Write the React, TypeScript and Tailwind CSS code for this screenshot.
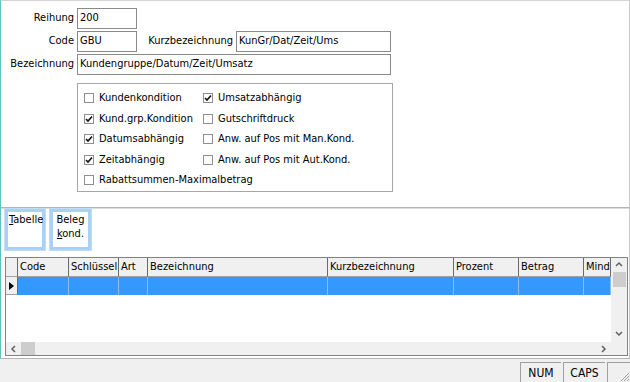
import React from "react";

const FONT = "font-['DejaVu_Sans_Condensed','DejaVu_Sans',sans-serif]";

type Col = { title: string; width: string };

const COLUMNS: Col[] = [
  { title: "Code", width: "w-[51px]" },
  { title: "Schlüssel", width: "w-[50px]" },
  { title: "Art", width: "w-[29px]" },
  { title: "Bezeichnung", width: "w-[180px]" },
  { title: "Kurzbezeichnung", width: "w-[126px]" },
  { title: "Prozent", width: "w-[65px]" },
  { title: "Betrag", width: "w-[65px]" },
  { title: "Mind", width: "w-[27px]" },
];

function Check({ checked, label }: { checked?: boolean; label: string }) {
  return (
    <div className="flex h-[20.5px] items-center gap-[5px] whitespace-nowrap">
      <span className="flex h-[10px] w-[10px] shrink-0 items-center justify-center border border-[#8f8f8f] bg-white">
        {checked && (
          <svg width="8" height="8" viewBox="0 0 8 8">
            <path d="M1 4 L3 6 L7 1.5" fill="none" stroke="#111" strokeWidth="1.6" />
          </svg>
        )}
      </span>
      <span>{label}</span>
    </div>
  );
}

function Field({ value, width }: { value: string; width: string }) {
  return (
    <div
      className={`flex h-[21px] ${width} items-center border border-[#8a8a8a] bg-white pl-[2px] whitespace-nowrap`}
    >
      {value}
    </div>
  );
}

function Chevron({ dir }: { dir: "up" | "down" | "left" | "right" }) {
  const d = {
    up: "M1 5 L4 2 L7 5",
    down: "M1 2 L4 5 L7 2",
    left: "M5 1 L2 4 L5 7",
    right: "M2 1 L5 4 L2 7",
  }[dir];
  return (
    <svg width="8" height="8" viewBox="0 0 8 8">
      <path d={d} fill="none" stroke="#606060" strokeWidth="1.5" />
    </svg>
  );
}

export default function App() {
  return (
    <div
      className={`flex h-[382px] w-[630px] flex-col overflow-hidden bg-white text-[11px] text-black ${FONT}`}
    >
      {/* Main area */}
      <div className="flex flex-1 flex-col border-l border-r border-t border-l-[#5cc3c3] border-r-[#c8c8c8] border-t-[#d4d4d4]">
        {/* Form */}
        <div className="flex h-[206px] flex-col pt-[7px]">
          <div className="flex flex-col gap-[2px]">
            <div className="flex items-center">
              <div className="w-[76px] pr-[3px] text-right">Reihung</div>
              <Field value="200" width="w-[60px]" />
            </div>
            <div className="flex items-center">
              <div className="w-[76px] pr-[3px] text-right">Code</div>
              <Field value="GBU" width="w-[60px]" />
              <div className="w-[99px] pr-[3px] text-right">Kurzbezeichnung</div>
              <Field value="KunGr/Dat/Zeit/Ums" width="w-[155px]" />
            </div>
            <div className="flex items-center">
              <div className="w-[76px] pr-[3px] text-right">Bezeichnung</div>
              <Field value="Kundengruppe/Datum/Zeit/Umsatz" width="w-[314px]" />
            </div>
          </div>

          {/* Options group */}
          <div className="ml-[76px] mt-[8px] h-[109px] w-[316px] border border-[#a6a6a6] pl-[6px] pt-[4px]">
            <div className="grid grid-cols-[119px_1fr]">
              <Check label="Kundenkondition" />
              <Check checked label="Umsatzabhängig" />
              <Check checked label="Kund.grp.Kondition" />
              <Check label="Gutschriftdruck" />
              <Check checked label="Datumsabhängig" />
              <Check label="Anw. auf Pos mit Man.Kond." />
              <Check checked label="Zeitabhängig" />
              <Check label="Anw. auf Pos mit Aut.Kond." />
              <div className="col-span-2">
                <Check label="Rabattsummen-Maximalbetrag" />
              </div>
            </div>
          </div>
        </div>

        {/* Splitter */}
        <div className="h-[2px] border-b border-t border-b-[#dcdcdc] border-t-[#b4b4b4]" />

        {/* Toolbar */}
        <div className="flex h-[48px] gap-[5px] pl-[4px]">
          <div className="h-[41px] w-[40px] border-[3px] border-[#a9d1f5] bg-white pl-[1px] pt-[1px] leading-[14px] whitespace-nowrap outline outline-1 outline-[#c4dcf2]">
            <span className="underline">T</span>abelle
          </div>
          <div className="h-[41px] w-[41px] border-[3px] border-[#a9d1f5] bg-white pt-[1px] text-center leading-[14px] outline outline-1 outline-[#c4dcf2]">
            Beleg
            <br />
            <span className="underline">k</span>ond.
          </div>
        </div>

        {/* Grid */}
        <div className="ml-[4px] flex h-[99px] w-[623px] flex-col border border-[#828282]">
          <div className="flex flex-1 overflow-hidden">
            <div className="flex flex-1 flex-col overflow-hidden">
              {/* Header */}
              <div className="flex h-[19px] shrink-0">
                <div className="w-[12px] shrink-0 border-b border-r border-b-[#a0a0a0] border-r-[#6b6b6b] bg-[#f0f0f0]" />
                {COLUMNS.map((c) => (
                  <div
                    key={c.title}
                    className={`${c.width} flex shrink-0 items-center overflow-hidden whitespace-nowrap border-b border-r border-b-[#a0a0a0] border-r-[#6b6b6b] bg-[#f0f0f0] pl-[2px]`}
                  >
                    {c.title}
                  </div>
                ))}
              </div>
              {/* Selected row */}
              <div className="flex h-[18px] shrink-0">
                <div className="flex w-[12px] shrink-0 items-center justify-center border-b border-r border-b-[#a0a0a0] border-r-[#6b6b6b] bg-[#f0f0f0]">
                  <svg width="5" height="8" viewBox="0 0 5 8">
                    <path d="M0 0 L5 4 L0 8 Z" fill="#000" />
                  </svg>
                </div>
                {COLUMNS.map((c) => (
                  <div
                    key={c.title}
                    className={`${c.width} shrink-0 border-r border-r-[#8cbdf0] bg-[#3399ff]`}
                  />
                ))}
              </div>
              <div className="flex-1 bg-white" />
            </div>
            {/* Vertical scrollbar */}
            <div className="flex w-[16px] shrink-0 flex-col items-center bg-[#f0f0f0]">
              <div className="flex h-[14px] items-center justify-center">
                <Chevron dir="up" />
              </div>
              <div className="h-[15px] w-[13px] bg-[#cdcdcd]" />
              <div className="flex-1" />
              <div className="flex h-[16px] items-center justify-center">
                <Chevron dir="down" />
              </div>
            </div>
          </div>
          {/* Horizontal scrollbar */}
          <div className="flex h-[13px] shrink-0 bg-[#f0f0f0]">
            <div className="flex w-[15px] items-center justify-center">
              <Chevron dir="left" />
            </div>
            <div className="w-[14px] bg-[#cdcdcd]" />
            <div className="flex-1" />
            <div className="flex w-[14px] items-center justify-center">
              <Chevron dir="right" />
            </div>
            <div className="w-[16px]" />
          </div>
        </div>
        <div className="flex-1" />
      </div>

      {/* Status bar */}
      <div className="flex h-[24px] shrink-0 justify-end gap-[2px] border-t border-t-[#b4b4b4] bg-[#f0f0f0] pt-[3px]">
        <div className="flex w-[41px] items-center justify-center border-l border-t border-l-[#a0a0a0] border-t-[#a0a0a0] text-[12px]">
          NUM
        </div>
        <div className="flex w-[42px] items-center justify-center border-l border-t border-l-[#a0a0a0] border-t-[#a0a0a0] text-[12px]">
          CAPS
        </div>
        <div className="relative w-[23px] border-l border-t border-l-[#a0a0a0] border-t-[#a0a0a0]">
          <svg className="absolute bottom-0 right-0" width="12" height="12" viewBox="0 0 12 12">
            <path d="M11 3 L3 11 M11 6 L6 11 M11 9 L9 11" stroke="#a0a0a0" strokeWidth="1" />
          </svg>
        </div>
      </div>
    </div>
  );
}
